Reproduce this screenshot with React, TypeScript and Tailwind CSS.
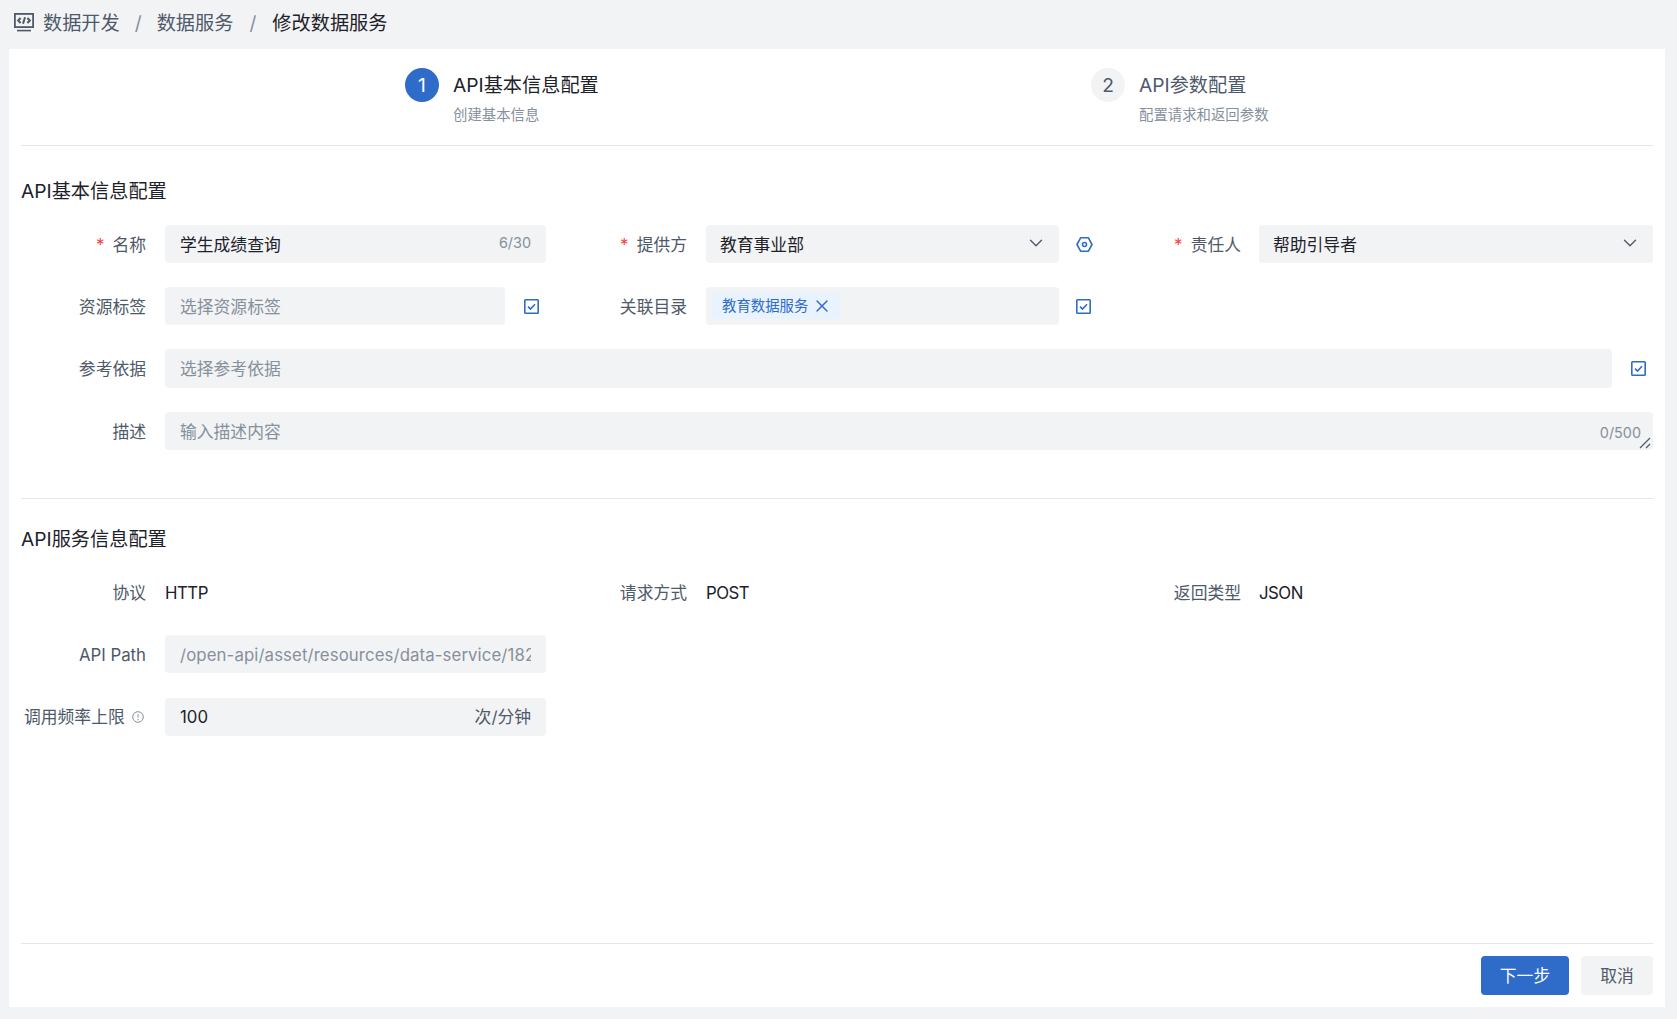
import type { ReactNode } from "react";
import { ChevronDown, X } from "lucide-react";

const fontStack = "font-['Inter','Noto_Sans_CJK_SC',sans-serif]";

function CheckSquare() {
  return (
    <svg width="15" height="15" viewBox="0 0 15 15" fill="none" className="shrink-0">
      <rect x="0.8" y="0.8" width="13.4" height="13.4" rx="0.8" stroke="#2f6bc8" strokeWidth="1.6" />
      <path d="M4 7.6l2.5 2.4L11 5.2" stroke="#2f6bc8" strokeWidth="1.6" />
    </svg>
  );
}

function HexIcon() {
  return (
    <svg width="17" height="15" viewBox="0 0 17 15" fill="none" className="shrink-0">
      <path d="M4.6 0.8h7.8L16 7.5l-3.6 6.7H4.6L1 7.5z" stroke="#2f6bc8" strokeWidth="1.6" strokeLinejoin="round" />
      <circle cx="8.5" cy="7.5" r="2" stroke="#2f6bc8" strokeWidth="1.6" />
    </svg>
  );
}

function Label({ required, children }: { required?: boolean; children: ReactNode }) {
  return (
    <span className="flex items-center justify-end whitespace-nowrap pt-[3px] text-[16.8px] text-[#4e5969]">
      {required && <span className="mr-[8px] text-[17px] text-[#f53f3f]">*</span>}
      {children}
    </span>
  );
}

function Box({ className = "pt-[3px]", children }: { className?: string; children?: ReactNode }) {
  return (
    <div className={`flex h-full min-w-0 items-center rounded-[4px] bg-[#f2f3f5] text-[16.8px] ${className}`}>
      {children}
    </div>
  );
}

function Select({ value }: { value: string }) {
  return (
    <Box className="justify-between pl-[14px] pr-[12px] pt-[3px] text-[#1d2129]">
      <span>{value}</span>
      <ChevronDown className="mb-[5px] size-[22px] text-[#4e5969]" strokeWidth={1.5} />
    </Box>
  );
}

function Section({ title }: { title: string }) {
  return <h2 className="text-[19.2px] leading-[28px] text-[#1d2129]">{title}</h2>;
}

export default function App() {
  return (
    <div className={`flex h-[1019px] flex-col bg-[#f2f3f5] ${fontStack}`}>
      {/* 面包屑 */}
      <div className="flex h-[49px] shrink-0 items-center pb-[3px] pl-[14px] text-[19.2px] text-[#4e5969]">
        <svg width="20" height="19" viewBox="0 0 20 19" fill="none" className="mr-[9px] mb-[2px] shrink-0">
          <rect x="0.9" y="0.9" width="18.2" height="13.2" stroke="#4e5969" strokeWidth="1.8" />
          <path d="M6.6 5l-2.4 2.5 2.4 2.5M13.4 5l2.4 2.5-2.4 2.5M11 4.2L9 10.8" stroke="#4e5969" strokeWidth="2" />
          <path d="M3 17.6h14" stroke="#4e5969" strokeWidth="1.6" />
        </svg>
        <span>数据开发</span>
        <span className="mx-[15px] text-[#86909c]">/</span>
        <span>数据服务</span>
        <span className="mx-[16px] text-[#86909c]">/</span>
        <span className="text-[#1d2129]">修改数据服务</span>
      </div>

      <div className="mb-[12px] ml-[9px] mr-[12px] flex flex-1 flex-col bg-white px-[12px]">
        {/* 步骤条 */}
        <div className="flex h-[97px] shrink-0 border-b border-[#e5e6eb] pl-[384px] pt-[19px]">
          <div className="flex w-[686px]">
            <div className="flex size-[34px] items-center justify-center rounded-full bg-[#2f6bc8] text-[19.2px] text-white">1</div>
            <div className="ml-[14px]">
              <div className="text-[19.2px] leading-[34px] text-[#1d2129]">API基本信息配置</div>
              <div className="mt-[2px] text-[14.4px] leading-[22px] text-[#86909c]">创建基本信息</div>
            </div>
          </div>
          <div className="flex">
            <div className="flex size-[34px] items-center justify-center rounded-full bg-[#f2f3f5] text-[19.2px] text-[#4e5969]">2</div>
            <div className="ml-[14px]">
              <div className="text-[19.2px] leading-[34px] text-[#4e5969]">API参数配置</div>
              <div className="mt-[2px] text-[14.4px] leading-[22px] text-[#86909c]">配置请求和返回参数</div>
            </div>
          </div>
        </div>

        {/* API基本信息配置 */}
        <div className="flex h-[353px] shrink-0 flex-col border-b border-[#e5e6eb] pt-[31px]">
          <Section title="API基本信息配置" />
          <div className="mt-[20px] flex flex-col gap-[24px]">
            <div className="flex h-[38px]">
              <div className="flex w-[125px] justify-end"><Label required>名称</Label></div>
              <Box className="ml-[19px] w-[381px] justify-between px-[15px] pt-[3px] text-[#1d2129]">
                <span>学生成绩查询</span>
                <span className="mb-[5px] text-[14.4px] text-[#86909c]">6/30</span>
              </Box>
              <div className="flex w-[141px] justify-end"><Label required>提供方</Label></div>
              <div className="ml-[19px] h-full w-[353px]"><Select value="教育事业部" /></div>
              <div className="ml-[17px] flex items-center"><HexIcon /></div>
              <div className="flex w-[148px] justify-end"><Label required>责任人</Label></div>
              <div className="ml-[18px] h-full flex-1"><Select value="帮助引导者" /></div>
            </div>

            <div className="flex h-[38px]">
              <div className="flex w-[125px] justify-end"><Label>资源标签</Label></div>
              <Box className="ml-[19px] w-[340px] px-[15px] pt-[3px] text-[#86909c]">选择资源标签</Box>
              <div className="ml-[19px] flex items-center"><CheckSquare /></div>
              <div className="flex w-[148px] justify-end"><Label>关联目录</Label></div>
              <div className="ml-[19px] h-full w-[353px]">
                <Box className="pl-[6px]">
                  <span className="flex h-[26px] w-[128px] items-center rounded-[3px] bg-[#e8f3ff] pl-[10px] text-[14.4px] text-[#2f6bc8]">
                    教育数据服务
                    <X className="ml-[4px] size-[20px]" strokeWidth={1.7} />
                  </span>
                </Box>
              </div>
              <div className="ml-[17px] flex items-center"><CheckSquare /></div>
            </div>

            <div className="flex h-[39px]">
              <div className="flex w-[125px] justify-end"><Label>参考依据</Label></div>
              <Box className="ml-[19px] w-[1447px] px-[15px] pt-[3px] text-[#86909c]">选择参考依据</Box>
              <div className="ml-[19px] flex items-center"><CheckSquare /></div>
            </div>

            <div className="flex h-[38px]">
              <div className="flex w-[125px] justify-end"><Label>描述</Label></div>
              <Box className="relative ml-[19px] flex-1 justify-between pl-[15px] pr-[12px] pt-[3px] text-[#86909c]">
                <span>输入描述内容</span>
                <span className="text-[14.4px]">0/500</span>
                <svg width="12" height="12" viewBox="0 0 12 12" fill="none" className="absolute bottom-[1px] right-[2px]">
                  <path d="M1 11L11 1M7 11l4-4" stroke="#4e5969" strokeWidth="1.2" />
                </svg>
              </Box>
            </div>
          </div>
        </div>

        {/* API服务信息配置 */}
        <div className="flex flex-1 flex-col pt-[26px]">
          <Section title="API服务信息配置" />
          <div className="mt-[20px] flex h-[38px] items-center text-[16.8px] text-[#1d2129]">
            <div className="flex w-[125px] justify-end"><Label>协议</Label></div>
            <span className="ml-[19px] w-[381px] pt-[3px] tracking-[-0.5px]">HTTP</span>
            <div className="flex w-[141px] justify-end"><Label>请求方式</Label></div>
            <span className="ml-[19px] w-[387px] pt-[3px] tracking-[-0.5px]">POST</span>
            <div className="flex w-[148px] justify-end"><Label>返回类型</Label></div>
            <span className="ml-[18px] pt-[3px] tracking-[-0.5px]">JSON</span>
          </div>

          <div className="mt-[24px] flex flex-col gap-[25px]">
            <div className="flex h-[38px]">
              <div className="flex w-[125px] justify-end"><Label>API Path</Label></div>
              <Box className="ml-[19px] w-[381px] px-[15px] pt-[3px] text-[#86909c]">
                <span className="block w-full overflow-hidden whitespace-nowrap tracking-[0.1px]">/open-api/asset/resources/data-service/1823456789</span>
              </Box>
            </div>

            <div className="flex h-[38px]">
              <div className="flex w-[125px] items-center justify-between pl-[3px] pr-[2px]">
                <span className="whitespace-nowrap pt-[2px] text-[16.8px] text-[#4e5969]">调用频率上限</span>
                <svg width="12" height="12" viewBox="0 0 12 12" fill="none">
                  <circle cx="6" cy="6" r="5.3" stroke="#86909c" strokeWidth="1" />
                  <path d="M6 3v3.6M6 8v1.2" stroke="#86909c" strokeWidth="1" />
                </svg>
              </div>
              <Box className="ml-[19px] w-[381px] justify-between px-[15px] pt-[2px] text-[#1d2129]">
                <span>100</span>
                <span className="text-[#4e5969]">次/分钟</span>
              </Box>
            </div>
          </div>
        </div>

        {/* 底部按钮 */}
        <div className="flex h-[64px] shrink-0 items-end justify-end gap-[12px] border-t border-[#e5e6eb] pb-[12px]">
          <button className="h-[39px] w-[88px] rounded-[4px] bg-[#2f6bc8] pt-[2px] text-[16.8px] text-white">下一步</button>
          <button className="h-[39px] w-[72px] rounded-[4px] bg-[#f2f3f5] pt-[2px] text-[16.8px] text-[#4e5969]">取消</button>
        </div>
      </div>
    </div>
  );
}
